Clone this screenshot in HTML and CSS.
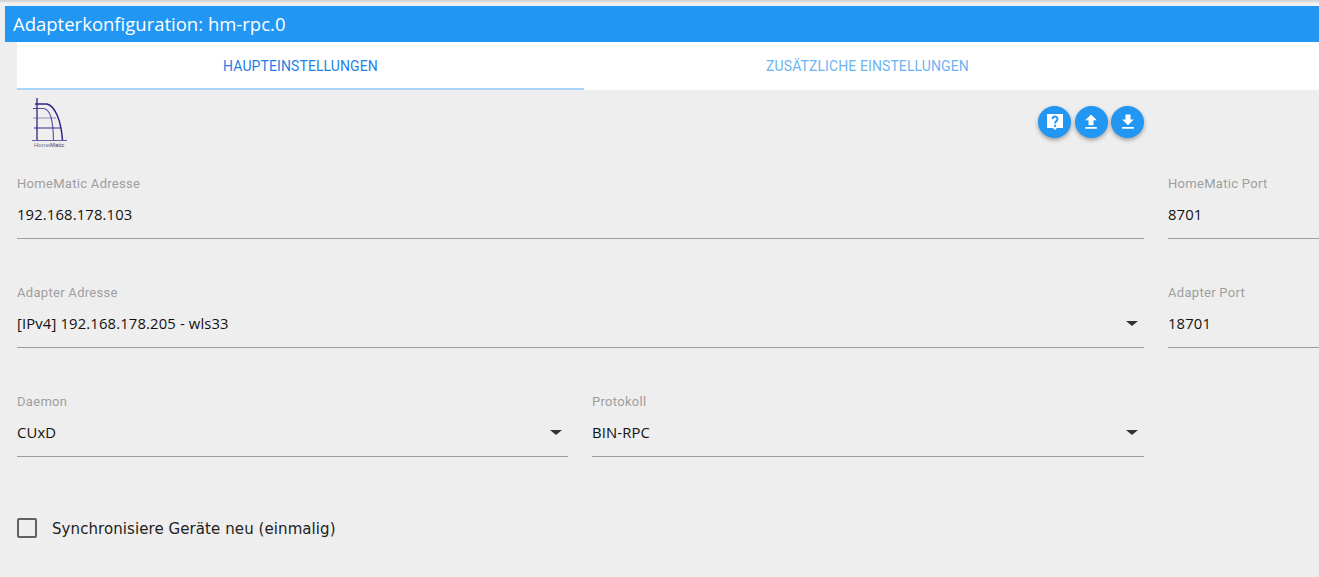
FILE: index.html
```html
<!DOCTYPE html>
<html lang="de">
<head>
    <meta charset="UTF-8">
    <meta name="viewport" content="width=device-width, initial-scale=1.0">
    <title>Adapterkonfiguration</title>
    <link rel="stylesheet" href="styles.css">
</head>
<body>

<div class="title-bar">Adapterkonfiguration: hm-rpc.0</div>

<div class="content">
    <div class="tabs">
        <div class="tab active">HAUPTEINSTELLUNGEN</div>
        <div class="tab">ZUSÄTZLICHE EINSTELLUNGEN</div>
    </div>

    <div class="toolbar">
        <svg class="logo" viewBox="0 0 40 52" width="40" height="52">
            <g fill="none" stroke="#2e2488">
                <path d="M7 2V44" stroke-width="1.300"/>
                <path d="M5 8H17C25 10 31 24 32.500 44" stroke-width="1.500"/>
                <path d="M3 12.500H14C20 14 23 22 23.500 44" stroke-width="1.100" opacity=".8"/>
                <path d="M3 22H26" stroke-width=".8" opacity=".6"/>
                <path d="M4 32H30" stroke-width="1.100" opacity=".85"/>
                <path d="M2 44.500H37" stroke-width="1" opacity=".7"/>
            </g>
            <text class="logo-text" x="4" y="50.500">Home<tspan class="logo-bold">Matic</tspan></text>
        </svg>
        <div class="actions">
            <button class="fab">
                <svg viewBox="0 0 20 20" width="20" height="20"><path fill="#fff" d="M2 2h16v14h-6l-2 2-2-2H2z"/><path fill="none" stroke="#2196f3" stroke-width="2" d="M7.500 7a2.500 2.500 0 1 1 3.800 2.100c-.9.600-1.300 1-1.300 2.400"/><rect x="9" y="12.800" width="2" height="2" fill="#2196f3"/></svg>
            </button>
            <button class="fab">
                <svg viewBox="0 0 24 24" width="20" height="20"><path fill="#fff" d="M9 16h6v-6h4l-7-7-7 7h4zm-4 2h14v2H5z"/></svg>
            </button>
            <button class="fab">
                <svg viewBox="0 0 24 24" width="20" height="20"><path fill="#fff" d="M19 9h-4V3H9v6H5l7 7 7-7zM5 18v2h14v-2H5z"/></svg>
            </button>
        </div>
    </div>

    <div class="form">
        <div class="field wide">
            <label>HomeMatic Adresse</label>
            <div class="value">192.168.178.103</div>
        </div>
        <div class="field side">
            <label>HomeMatic Port</label>
            <div class="value">8701</div>
        </div>

        <div class="field wide">
            <label>Adapter Adresse</label>
            <div class="value select">[IPv4] 192.168.178.205 - wls33</div>
        </div>
        <div class="field side">
            <label>Adapter Port</label>
            <div class="value">18701</div>
        </div>

        <div class="field">
            <label>Daemon</label>
            <div class="value select">CUxD</div>
        </div>
        <div class="field">
            <label>Protokoll</label>
            <div class="value select">BIN-RPC</div>
        </div>
    </div>

    <div class="check-row">
        <span class="checkbox"></span>
        <span class="check-label">Synchronisiere Geräte neu (einmalig)</span>
    </div>
</div>

</body>
</html>
```
FILE: styles.css
```css
html, body {
    height: 100%;
}
body {
    margin: 0;
    padding-top: 6px;
    box-sizing: border-box;
    background: #eeeeee;
    font-family: 'Roboto', sans-serif;
    overflow: hidden;
    position: relative;
}
body::before {
    content: '';
    position: absolute;
    top: 0;
    left: 0;
    right: 0;
    height: 6px;
    background: linear-gradient(#cfcfcf, #f2f2f2 60%);
}
.title-bar {
    margin-left: 5px;
    height: 36px;
    line-height: 36px;
    padding-left: 8px;
    background: #2196f3;
    color: #fff;
    font-family: 'Open Sans', sans-serif;
    font-size: 18.500px;
}
.content {
    padding-left: 17px;
}
.tabs {
    display: flex;
    height: 48px;
    background: #fff;
}
.tab {
    width: 567px;
    height: 48px;
    box-sizing: border-box;
    text-align: center;
    line-height: 48px;
    font-size: 14px;
    letter-spacing: 0.1px;
    color: #6db3f2;
}
.tab.active {
    color: #1e7fe6;
    border-bottom: 2px solid #a6d4fa;
}
.toolbar {
    display: flex;
    justify-content: space-between;
    width: 1127px;
    height: 73px;
}
.logo {
    margin: 6px 0 0 13px;
}
.logo-text {
    font-family: 'Liberation Sans', sans-serif;
    font-size: 6px;
    fill: #6f6c92;
}
.logo-bold {
    fill: #3c3880;
}
.actions {
    display: flex;
    gap: 3.500px;
    margin-top: 16px;
}
.fab {
    width: 33px;
    height: 32px;
    padding: 0;
    border: none;
    border-radius: 50%;
    background: #2196f3;
    box-shadow: 0 2px 4px rgba(0, 0, 0, 0.35);
    display: flex;
    align-items: center;
    justify-content: center;
}
.form {
    display: grid;
    grid-template-columns: 551px 552px 151px;
    column-gap: 24px;
    row-gap: 33px;
}
.wide {
    grid-column: 1 / 3;
}
.side {
    grid-column: 3;
}
.field {
    height: 75px;
    border-bottom: 1px solid #9e9e9e;
}
.field label {
    display: block;
    font-size: 13px;
    line-height: 20px;
    color: #9e9e9e;
    letter-spacing: 0.3px;
    padding-top: 11px;
}
.value {
    margin-top: 9px;
    font-family: 'Open Sans', sans-serif;
    font-size: 14.800px;
    letter-spacing: 0.15px;
    line-height: 22px;
    color: #111;
    position: relative;
}
.select::after {
    content: '';
    position: absolute;
    right: 6px;
    top: 9px;
    border-left: 6px solid transparent;
    border-right: 6px solid transparent;
    border-top: 5px solid #333;
}
.check-row {
    display: flex;
    align-items: center;
    margin-top: 60px;
}
.checkbox {
    width: 16px;
    height: 16px;
    border: 2px solid #616161;
    border-radius: 2px;
}
.check-label {
    margin-left: 15px;
    padding-top: 3px;
    font-family: 'DejaVu Sans', sans-serif;
    font-size: 15px;
    letter-spacing: 0.08px;
    color: #222;
}
```
